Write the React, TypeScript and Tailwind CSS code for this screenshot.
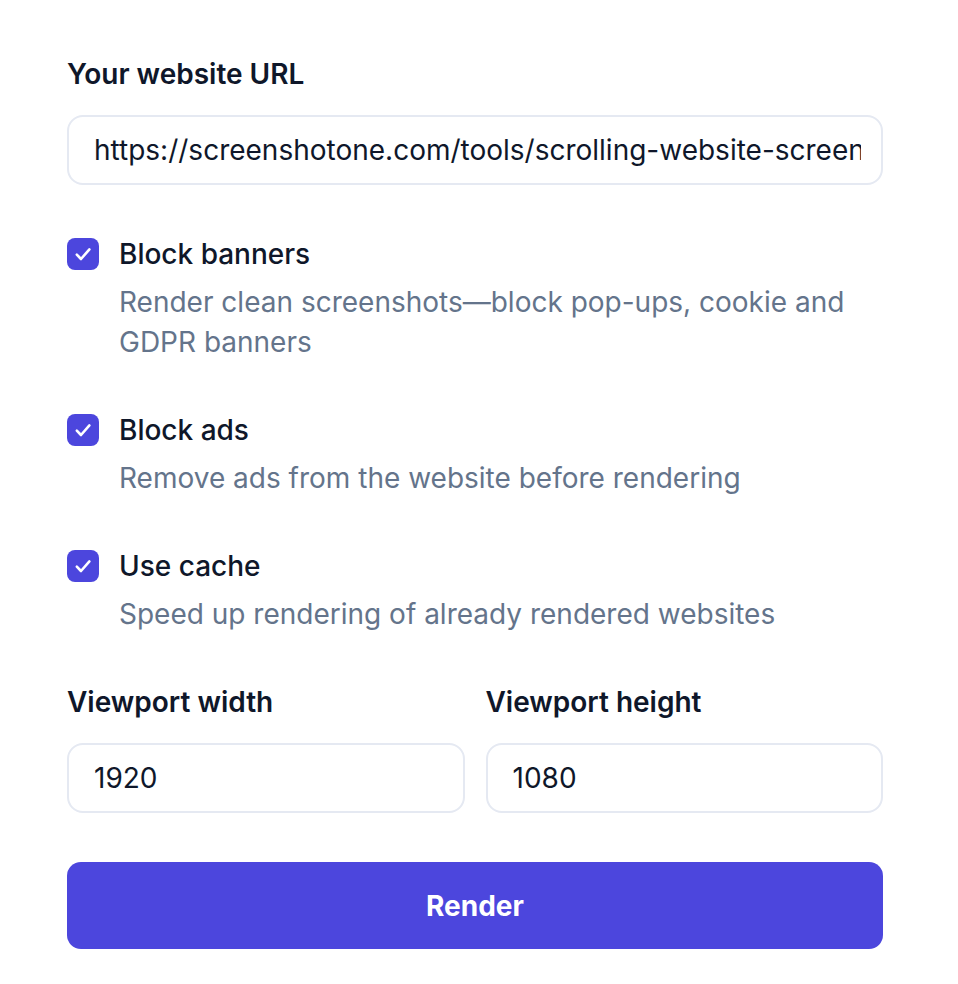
import { useState } from 'react';

// Render options form for the scrolling screenshot tool

type Option = {
  id: string;
  label: string;
  description: string;
};

const options: Option[] = [
  {
    id: 'block_banners',
    label: 'Block banners',
    description: 'Render clean screenshots—block pop-ups, cookie and GDPR banners',
  },
  {
    id: 'block_ads',
    label: 'Block ads',
    description: 'Remove ads from the website before rendering',
  },
  {
    id: 'cache',
    label: 'Use cache',
    description: 'Speed up rendering of already rendered websites',
  },
];

function Checkbox({ checked, onChange }: { checked: boolean; onChange: () => void }) {
  return (
    <button
      type="button"
      onClick={onChange}
      className={
        checked
          ? 'flex h-[32px] w-[32px] shrink-0 items-center justify-center rounded-[8px] bg-[#4c46dd]'
          : 'flex h-[32px] w-[32px] shrink-0 items-center justify-center rounded-[8px] border-2 border-[#cbd5e1] bg-white'
      }
    >
      {checked && (
        <svg viewBox="0 0 32 32" className="h-[32px] w-[32px]" fill="none">
          <path
            d="M9.8 16.6l4.2 4.4 8.4-9.6"
            stroke="white"
            strokeWidth="2.6"
            strokeLinecap="round"
            strokeLinejoin="round"
          />
        </svg>
      )}
    </button>
  );
}

export default function App() {
  const [url, setUrl] = useState('https://screenshotone.com/tools/scrolling-website-screenshot');
  const [checked, setChecked] = useState<Record<string, boolean>>({
    block_banners: true,
    block_ads: true,
    cache: true,
  });
  const [width, setWidth] = useState('1920');
  const [height, setHeight] = useState('1080');

  const inputClass =
    'block h-[70px] w-full rounded-[16px] border-2 border-[#e5e9f2] bg-white pl-[25px] pr-[20px] text-[28px] text-[#0f172a] outline-none';

  return (
    <div className="min-h-screen bg-white font-['Inter',sans-serif]">
      <form className="ml-[67px] w-[816px] pt-[54px]" onSubmit={(e) => e.preventDefault()}>
        {/* URL */}
        <label className="block text-[28px] font-semibold leading-[40px] text-[#0f172a]">
          Your website URL
        </label>
        <input
          type="text"
          value={url}
          onChange={(e) => setUrl(e.target.value)}
          className={`mt-[21px] ${inputClass}`}
        />

        {/* Options */}
        <div className="mt-[49px] flex flex-col gap-[48px]">
          {options.map((opt) => (
            <div key={opt.id} className="flex gap-[20px]">
              <div className="flex h-[40px] items-center">
                <Checkbox
                  checked={checked[opt.id]}
                  onChange={() => setChecked((c) => ({ ...c, [opt.id]: !c[opt.id] }))}
                />
              </div>
              <div>
                <div className="text-[28px] font-medium leading-[40px] text-[#0f172a]">
                  {opt.label}
                </div>
                <p className="mt-[8px] w-[740px] text-[28px] leading-[40px] text-[#64748b]">
                  {opt.description}
                </p>
              </div>
            </div>
          ))}
        </div>

        {/* Viewport */}
        <div className="mt-[48px] grid grid-cols-2 gap-[21px]">
          <div>
            <label className="block text-[28px] font-semibold leading-[40px] text-[#0f172a]">
              Viewport width
            </label>
            <input
              type="text"
              value={width}
              onChange={(e) => setWidth(e.target.value)}
              className={`mt-[21px] ${inputClass}`}
            />
          </div>
          <div>
            <label className="block text-[28px] font-semibold leading-[40px] text-[#0f172a]">
              Viewport height
            </label>
            <input
              type="text"
              value={height}
              onChange={(e) => setHeight(e.target.value)}
              className={`mt-[21px] ${inputClass}`}
            />
          </div>
        </div>

        <button
          type="submit"
          className="mt-[49px] flex h-[87px] w-full items-center justify-center rounded-[14px] bg-[#4c46dd] text-[28px] font-bold text-white"
        >
          Render
        </button>
      </form>
    </div>
  );
}
